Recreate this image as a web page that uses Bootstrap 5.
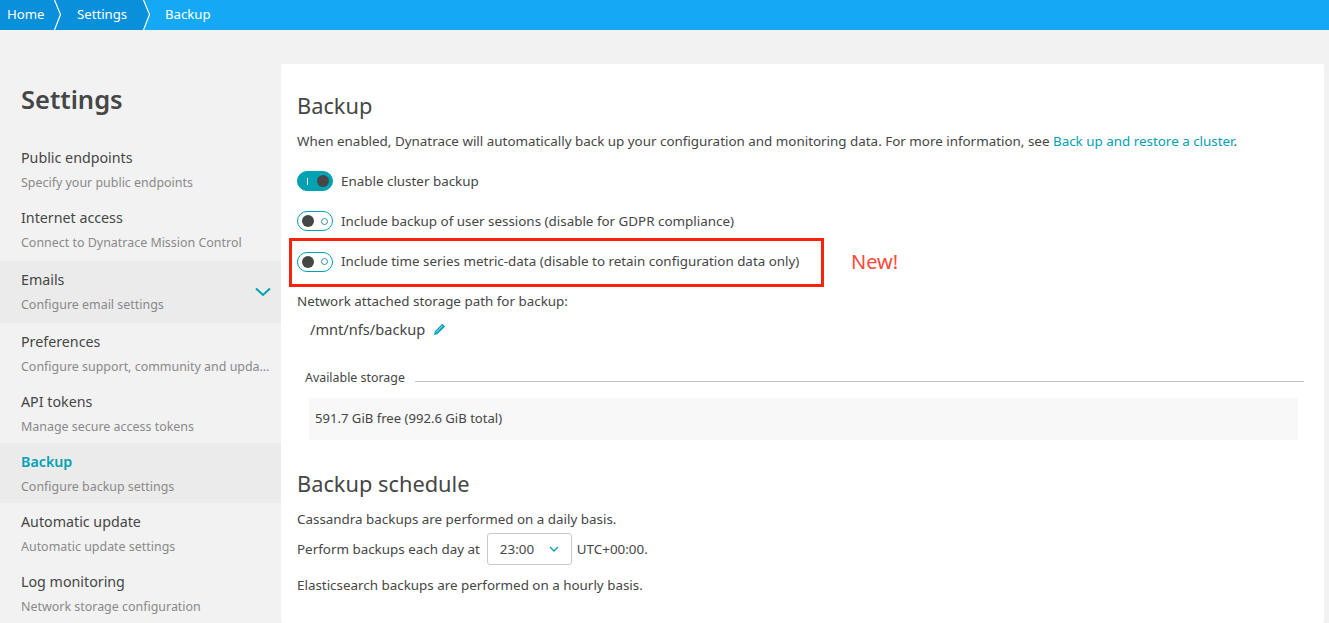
<!DOCTYPE html>
<html lang="en">
<head>
<meta charset="utf-8">
<title>Backup</title>
<link href="https://cdn.jsdelivr.net/npm/bootstrap@5.3.0/dist/css/bootstrap.min.css" rel="stylesheet">
<style>
html,body{height:100%;}
body{background:#f2f2f2;font-family:"Noto Sans",sans-serif;font-size:13.4px;color:#454646;overflow:hidden;}
.topbar{height:30px;background:#14a8f5;color:#fff;font-size:13.2px;}
.crumb{background:#0a8fdb;height:30px;}
.crumb-item{padding-left:7px;width:52.5px;line-height:29px;}
.crumb-sep{width:10px;height:30px;display:block;flex:none;}
.crumb-item2{padding-left:14.5px;width:79px;line-height:29px;}
.crumb-last{padding-left:13.5px;line-height:29px;}
.sidebar{width:281px;flex:none;}
.side-title{font-size:25.500px;font-weight:600;line-height:34px;padding:52px 0 0 21px;margin:0 0 23px;color:#454646;}
.side-item{height:60px;padding:9px 9px 0 21px;position:relative;}
.side-item.tall{height:62px;margin-top:2px;}
.side-item.shade{background:#ebebeb;}
.side-name{font-size:14.250px;line-height:20px;color:#454646;}
.side-sub{font-size:12.450px;line-height:16px;margin-top:7px;color:#898989;white-space:nowrap;overflow:hidden;text-overflow:ellipsis;}
.side-item.active .side-name{color:#00a1b2;font-weight:600;}
.side-chev{position:absolute;right:10px;top:26px;}
.panel{background:#fff;margin:34px 5px 0 0;padding:27px 16px 0;flex:1;border-radius:2px;}
.head{font-size:21.800px;line-height:30px;font-weight:400;margin:0;color:#454646;}
.intro{margin:10px 0 0;line-height:20px;}
.intro a{color:#00a1b2;text-decoration:none;}
.sw-row{height:40px;}
.sw-first{margin-top:10px;}
.sw{width:36px;height:20px;border-radius:10px;border:1px solid #00a1b2;flex:none;margin-right:8px;background:#fff;padding:0 4px;}
.sw.on{background:#00a1b2;padding:0 3px 0 9px;}
.sw-knob{width:12px;height:12px;border-radius:50%;background:#454646;}
.sw-ring{width:7px;height:7px;border-radius:50%;border:1px solid #3d8d98;}
.sw-bar{width:1px;height:7px;background:#fff;}
.hl{border:3px solid #f7230c;width:535px;height:49px;margin:-3px 0 0 -8px;padding:0 0 2px 5px;}
.new-tag{color:#fb4a3c;font-size:20px;margin:0 0 4px 27px;}
.path-label{margin:4px 0 0;line-height:20px;}
.path-val{font-size:14.600px;line-height:20px;margin:8px 0 0 13px;}
.legend-title{font-size:12.400px;margin:0 0 0 8px;padding-right:10px;line-height:16px;}
.legend-line{flex:1;border-top:1px solid #c4c4c4;margin-top:11px;}
.legend{margin:31px 4px 0 0;}
.storage{background:#f8f8f8;margin:12px 10px 0 12px;height:42px;line-height:40px;padding-left:6px;font-size:13.100px;}
.head2{margin-top:29px;}
.para{margin:10px 0 0;line-height:20px;}
.time-row{margin-top:4px;height:32px;}
.time-box{width:85px;height:32px;border:1px solid #c9c9c9;border-radius:3px;margin:0 5px 0 7px;padding:0 12px;}
</style>
</head>
<body>
<div class="topbar d-flex">
  <div class="crumb d-flex">
    <div class="crumb-item">Home</div>
    <svg class="crumb-sep" viewBox="0 0 10 30"><path d="M0 0h2l6 14.500-6 15.500H0z" fill="#0a8fdb"/><path d="M1.500 0l6 14.500-6 15.500" fill="none" stroke="#fff" stroke-width="1.200"/></svg>
    <div class="crumb-item2">Settings</div>
  </div>
  <svg class="crumb-sep" viewBox="0 0 10 30"><path d="M0 0h1.500l6 14.500-6 15.500H0z" fill="#0a8fdb"/><path d="M1.500 0l6 14.500-6 15.500" fill="none" stroke="#fff" stroke-width="1.200"/></svg>
  <div class="crumb-last">Backup</div>
</div>
<div class="d-flex">
  <nav class="sidebar">
    <h1 class="side-title">Settings</h1>
    <div class="side-item"><div class="side-name">Public endpoints</div><div class="side-sub">Specify your public endpoints</div></div>
    <div class="side-item"><div class="side-name">Internet access</div><div class="side-sub">Connect to Dynatrace Mission Control</div></div>
    <div class="side-item tall shade"><div class="side-name">Emails</div><div class="side-sub">Configure email settings</div>
      <svg class="side-chev" width="16" height="10" viewBox="0 0 16 10"><path d="M1 1.500l7 6.500 7-6.500" fill="none" stroke="#00a1b2" stroke-width="2"/></svg></div>
    <div class="side-item"><div class="side-name">Preferences</div><div class="side-sub">Configure support, community and updates</div></div>
    <div class="side-item"><div class="side-name">API tokens</div><div class="side-sub">Manage secure access tokens</div></div>
    <div class="side-item active shade"><div class="side-name">Backup</div><div class="side-sub">Configure backup settings</div></div>
    <div class="side-item"><div class="side-name">Automatic update</div><div class="side-sub">Automatic update settings</div></div>
    <div class="side-item"><div class="side-name">Log monitoring</div><div class="side-sub">Network storage configuration</div></div>
  </nav>
  <main class="panel">
    <h2 class="head">Backup</h2>
    <p class="intro">When enabled, Dynatrace will automatically back up your configuration and monitoring data. For more information, see <a href="#">Back up and restore a cluster</a>.</p>
    <div class="sw-row sw-first d-flex align-items-center">
      <span class="sw on d-flex align-items-center justify-content-between"><span class="sw-bar"></span><span class="sw-knob"></span></span>Enable cluster backup
    </div>
    <div class="sw-row d-flex align-items-center">
      <span class="sw d-flex align-items-center justify-content-between"><span class="sw-knob"></span><span class="sw-ring"></span></span>Include backup of user sessions (disable for GDPR compliance)
    </div>
    <div class="d-flex align-items-center">
      <div class="hl d-flex align-items-center">
        <span class="sw d-flex align-items-center justify-content-between"><span class="sw-knob"></span><span class="sw-ring"></span></span>Include time series metric-data (disable to retain configuration data only)
      </div>
      <span class="new-tag">New!</span>
    </div>
    <p class="path-label">Network attached storage path for backup:</p>
    <div class="path-val d-flex align-items-center gap-2">/mnt/nfs/backup
      <svg width="14" height="14" viewBox="0 0 14 14"><path d="M1 13l.8-3.500 7.500-7.800 2.800 2.700-7.600 7.700z" fill="#00a1b2"/><path d="M3 10.500l6.800-7" stroke="#fff" stroke-width=".7"/></svg>
    </div>
    <div class="legend d-flex align-items-start"><span class="legend-title">Available storage</span><span class="legend-line"></span></div>
    <div class="storage">591.7 GiB free (992.6 GiB total)</div>
    <h2 class="head head2">Backup schedule</h2>
    <p class="para">Cassandra backups are performed on a daily basis.</p>
    <div class="time-row d-flex align-items-center">Perform backups each day at
      <span class="time-box d-flex align-items-center justify-content-between">23:00
        <svg width="10" height="6" viewBox="0 0 10 6"><path d="M1 1l4 4 4-4" fill="none" stroke="#00a1b2" stroke-width="1.300"/></svg>
      </span>UTC+00:00.
    </div>
    <p class="para">Elasticsearch backups are performed on a hourly basis.</p>
  </main>
</div>
<script src="https://cdn.jsdelivr.net/npm/bootstrap@5.3.0/dist/js/bootstrap.bundle.min.js"></script>
</body>
</html>
